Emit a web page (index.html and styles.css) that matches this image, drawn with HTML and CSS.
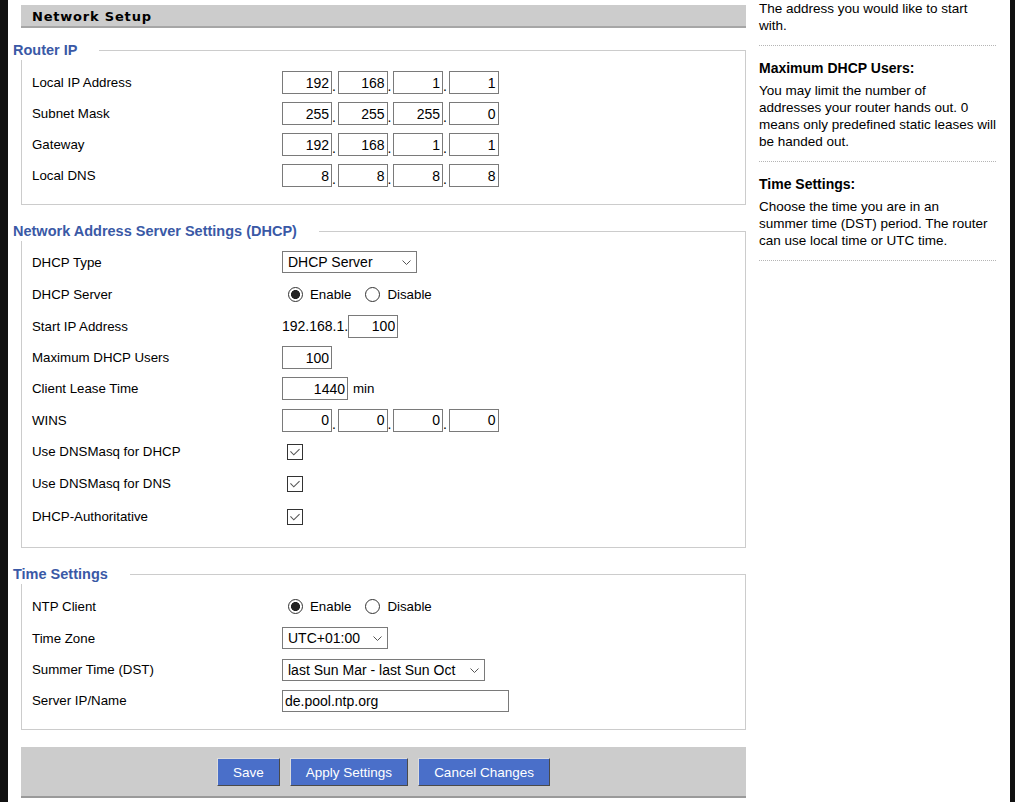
FILE: index.html
```html
<!DOCTYPE html>
<html lang="en">
<head>
<meta charset="utf-8">
<title>Network Setup</title>
<link rel="stylesheet" href="styles.css">
</head>
<body>
<div class="page">
  <div class="main">
    <h2 class="title">Network Setup</h2>

    <fieldset class="group g-router">
      <legend>Router IP</legend>
      <div class="row"><span class="label">Local IP Address</span>
        <span class="ip"><input class="txt oct" value="192"><span class="dot">.</span><input class="txt oct" value="168"><span class="dot">.</span><input class="txt oct" value="1"><span class="dot">.</span><input class="txt oct" value="1"></span></div>
      <div class="row"><span class="label">Subnet Mask</span>
        <span class="ip"><input class="txt oct" value="255"><span class="dot">.</span><input class="txt oct" value="255"><span class="dot">.</span><input class="txt oct" value="255"><span class="dot">.</span><input class="txt oct" value="0"></span></div>
      <div class="row"><span class="label">Gateway</span>
        <span class="ip"><input class="txt oct" value="192"><span class="dot">.</span><input class="txt oct" value="168"><span class="dot">.</span><input class="txt oct" value="1"><span class="dot">.</span><input class="txt oct" value="1"></span></div>
      <div class="row"><span class="label">Local DNS</span>
        <span class="ip"><input class="txt oct" value="8"><span class="dot">.</span><input class="txt oct" value="8"><span class="dot">.</span><input class="txt oct" value="8"><span class="dot">.</span><input class="txt oct" value="8"></span></div>
    </fieldset>

    <fieldset class="group g-dhcp">
      <legend>Network Address Server Settings (DHCP)</legend>
      <div class="row r32"><span class="label">DHCP Type</span>
        <span class="sel sel-type"><select><option>DHCP Server</option></select><svg class="chev" viewBox="0 0 9 5"><path d="M0.5 0.5 L4.5 4.5 L8.5 0.5"/></svg></span></div>
      <div class="row r32"><span class="label">DHCP Server</span>
        <span class="radios"><input type="radio" class="rd" name="dhcp" checked><span class="rtxt">Enable</span><input type="radio" class="rd" name="dhcp"><span class="rtxt">Disable</span></span></div>
      <div class="row r32"><span class="label">Start IP Address</span>
        <span class="prefix">192.168.1.</span><input class="txt oct" value="100"></div>
      <div class="row"><span class="label">Maximum DHCP Users</span>
        <input class="txt oct" value="100"></div>
      <div class="row"><span class="label">Client Lease Time</span>
        <input class="txt lease" value="1440"><span class="unit">min</span></div>
      <div class="row r32"><span class="label">WINS</span>
        <span class="ip"><input class="txt oct" value="0"><span class="dot">.</span><input class="txt oct" value="0"><span class="dot">.</span><input class="txt oct" value="0"><span class="dot">.</span><input class="txt oct" value="0"></span></div>
      <div class="row"><span class="label">Use DNSMasq for DHCP</span>
        <span class="chk"><svg viewBox="0 0 16 16"><path d="M2.8 7.4 L6.6 11.2 L13.2 4.6"/></svg></span></div>
      <div class="row r33"><span class="label">Use DNSMasq for DNS</span>
        <span class="chk"><svg viewBox="0 0 16 16"><path d="M2.8 7.4 L6.6 11.2 L13.2 4.6"/></svg></span></div>
      <div class="row r33"><span class="label">DHCP-Authoritative</span>
        <span class="chk"><svg viewBox="0 0 16 16"><path d="M2.8 7.4 L6.6 11.2 L13.2 4.6"/></svg></span></div>
    </fieldset>

    <fieldset class="group g-time">
      <legend>Time Settings</legend>
      <div class="row r32"><span class="label">NTP Client</span>
        <span class="radios"><input type="radio" class="rd" name="ntp" checked><span class="rtxt">Enable</span><input type="radio" class="rd" name="ntp"><span class="rtxt">Disable</span></span></div>
      <div class="row r32"><span class="label">Time Zone</span>
        <span class="sel sel-tz"><select><option>UTC+01:00</option></select><svg class="chev" viewBox="0 0 9 5"><path d="M0.5 0.5 L4.5 4.5 L8.5 0.5"/></svg></span></div>
      <div class="row"><span class="label">Summer Time (DST)</span>
        <span class="sel sel-dst"><select><option>last Sun Mar - last Sun Oct</option></select><svg class="chev" viewBox="0 0 9 5"><path d="M0.5 0.5 L4.5 4.5 L8.5 0.5"/></svg></span></div>
      <div class="row"><span class="label">Server IP/Name</span>
        <input class="txt server" value="de.pool.ntp.org"></div>
    </fieldset>

    <div class="buttons">
      <button class="btn">Save</button>
      <button class="btn">Apply Settings</button>
      <button class="btn">Cancel Changes</button>
    </div>
  </div>

  <div class="help">
    <div class="help-item first">
      <p>The address you would like to start<br>with.</p>
    </div>
    <div class="help-item">
      <h4>Maximum DHCP Users:</h4>
      <p>You may limit the number of<br>addresses your router hands out. 0<br>means only predefined static leases will<br>be handed out.</p>
    </div>
    <div class="help-item">
      <h4>Time Settings:</h4>
      <p>Choose the time you are in an<br>summer time (DST) period. The router<br>can use local time or UTC time.</p>
    </div>
  </div>
</div>
</body>
</html>
```

FILE: styles.css
```css
* { box-sizing: border-box; }

html, body {
  margin: 0;
  height: 100%;
}

body {
  background: #111;
  font-family: "Liberation Sans", Arial, sans-serif;
  font-size: 13.3px;
  color: #000;
  overflow: hidden;
}

.page {
  display: flex;
  margin: 0 5px 0 8px;
  height: 802px;
  background: #fff;
}

.main {
  width: 738px;
  flex: none;
  padding-left: 13px;
}

.title {
  margin: 5px 0 0;
  height: 23px;
  padding: 3px 0 0 11px;
  background: #ccc;
  border-bottom: 2px solid #a6a6a6;
  font: bold 13px/18px "DejaVu Sans", sans-serif;
  letter-spacing: 0.8px;
  color: #000;
}

.group {
  margin: 16px 0 0;
  min-width: 0;
  border: 1px solid #ccc;
  padding: 5px 0 14px 10px;
}

.group legend {
  margin-left: -19px;
  padding: 0 22px 0 0;
  font: bold 14.5px/20px "Liberation Sans", Arial, sans-serif;
  color: #3a59a6;
}

.g-router { margin-top: 12px; padding-top: 7px; padding-bottom: 13px; }
.g-time { padding-top: 6px; padding-bottom: 13px; }

.row {
  display: flex;
  align-items: center;
  height: 31px;
}
.row.r32 { height: 32px; }
.row.r33 { height: 33px; }

.label {
  width: 250px;
  flex: none;
}

.ip {
  display: flex;
  align-items: flex-end;
}

.dot {
  width: 5.5px;
  font-size: 14px;
  line-height: 16px;
}

.txt {
  height: 23px;
  margin: 0;
  border: 1px solid #7a7a7a;
  border-radius: 0;
  padding: 0 2px 0 3px;
  font: 14px "Liberation Sans", Arial, sans-serif;
  color: #000;
  background: #fff;
  outline: none;
}

.oct { width: 50px; text-align: right; }
.lease { width: 66px; text-align: right; }
.server { width: 227px; height: 22px; text-align: left; padding-left: 2px; }

.prefix { font-size: 14px; }
.unit { margin-left: 5px; }

.sel {
  position: relative;
  display: inline-block;
  height: 22px;
}

.sel select {
  appearance: none;
  -webkit-appearance: none;
  height: 22px;
  margin: 0;
  border: 1px solid #7a7a7a;
  border-radius: 0;
  padding: 0 20px 0 5px;
  font: 14px "Liberation Sans", Arial, sans-serif;
  color: #000;
  background: #fff;
  outline: none;
}

.sel-type select { width: 135px; }
.sel-tz select { width: 106px; }
.sel-dst select { width: 203px; }

.chev {
  position: absolute;
  right: 6px;
  top: 9px;
  width: 9px;
  height: 5px;
  fill: none;
  stroke: #555;
  stroke-width: 1;
}

.radios {
  display: flex;
  align-items: center;
  padding-left: 6px;
}

.rd {
  appearance: none;
  -webkit-appearance: none;
  width: 15px;
  height: 15px;
  margin: 0;
  border: 1.3px solid #333;
  border-radius: 50%;
  background: #fff;
}

.rd:checked {
  background: radial-gradient(circle, #222 0 4.2px, #fff 4.8px);
}

.rtxt { margin: 1px 14px 0 7px; }
.rtxt:last-child { margin-right: 0; margin-left: 7px; }

.chk {
  display: inline-block;
  width: 16px;
  height: 16px;
  margin-left: 5px;
  border: 1px solid #333;
  background: #fff;
}

.chk svg {
  display: block;
  width: 14px;
  height: 14px;
  fill: none;
  stroke: #555;
  stroke-width: 1.2;
}

.buttons {
  display: flex;
  justify-content: center;
  gap: 10px;
  margin-top: 17px;
  height: 51px;
  padding-top: 11px;
  background: #ccc;
  border-bottom: 2px solid #9a9a9a;
}

.btn {
  height: 28px;
  margin: 0;
  padding: 0 15px;
  border: 1px solid;
  border-color: #dcdcdc #4a4a4a #4a4a4a #dcdcdc;
  background: #4a6fc9;
  color: #fff;
  font: 13.5px "Liberation Sans", Arial, sans-serif;
}

.help {
  width: 237px;
  flex: none;
  margin-left: 13px;
  font-size: 13.5px;
  line-height: 17px;
  color: #000;
}

.help-item {
  padding: 14px 0 11px;
  border-bottom: 1px dotted #b5b5b5;
  white-space: nowrap;
}

.help-item.first { padding-top: 0; }

.help h4 {
  margin: 0 0 5px;
  font-size: 14px;
  font-weight: bold;
}

.help p { margin: 0; }
```
